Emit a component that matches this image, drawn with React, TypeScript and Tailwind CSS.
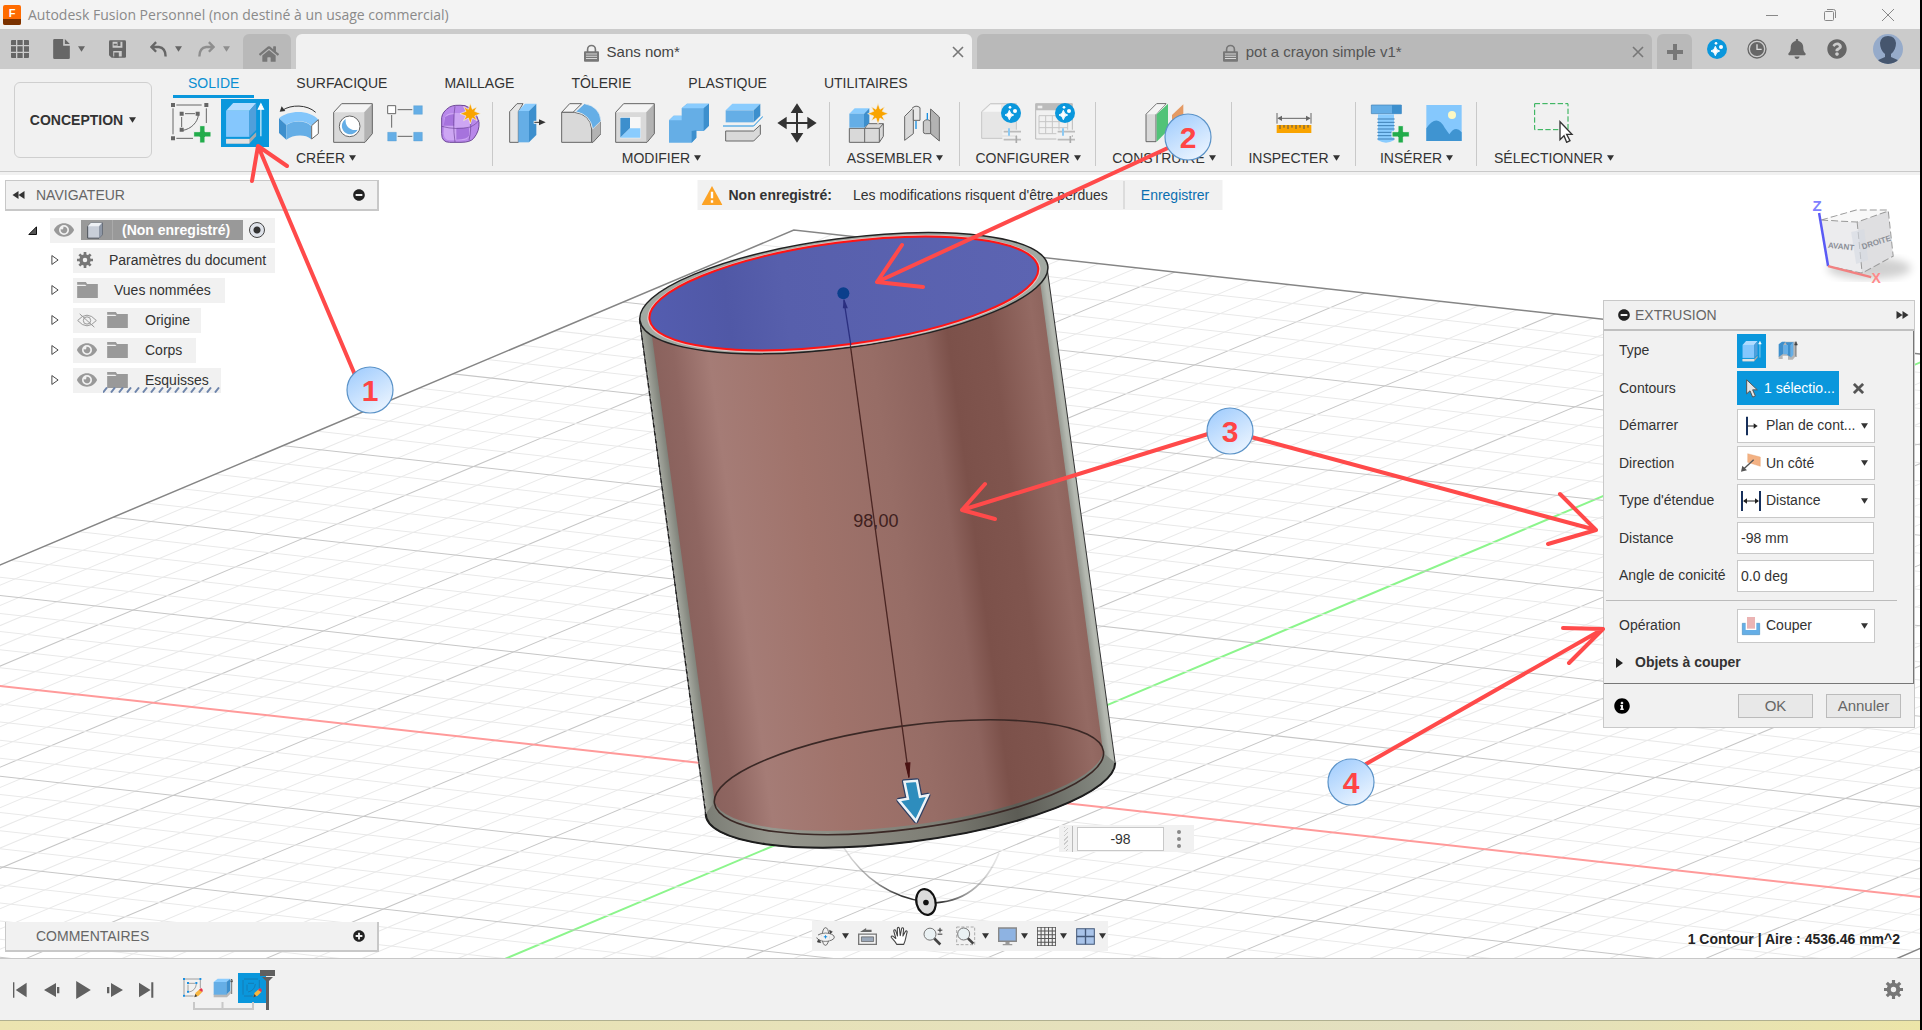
import type { ReactNode } from "react";
import { FaBell, FaEye, FaHome, FaInfoCircle, FaMinusCircle, FaPlusCircle, FaQuestionCircle } from "react-icons/fa";

const ink = "#666";

function Caret({ className = "text-[#333]" }: { className?: string }) {
    return (
        <svg viewBox="0 0 10 8" className={`h-[6px] w-[7px] shrink-0 ${className}`} fill="currentColor">
            <path d="M0 0h10L5 8z" />
        </svg>
    );
}

function Icon({ children, className = "size-10", box = "0 0 120 120" }: { children: ReactNode; className?: string; box?: string }) {
    return (
        <svg viewBox={box} className={`shrink-0 ${className}`} fill="none">
            {children}
        </svg>
    );
}

function Gear({ className = "size-4 text-[#777]" }: { className?: string }) {
    return (
        <svg viewBox="-30 -30 60 60" className={`shrink-0 ${className}`}>
            <circle r="15" fill="none" stroke="currentColor" strokeWidth="13" />
            {[0, 45, 90, 135].map((a) => (
                <path key={a} d="M-5-30H5V-17H-5zM-5 17H5V30H-5z" transform={`rotate(${a})`} fill="currentColor" />
            ))}
        </svg>
    );
}

/* ---------- Ribbon icons ---------- */

function GreenPlus({ x, y }: { x: number; y: number }) {
    return <path transform={`translate(${x} ${y})`} d="M-8-26H8V-8H26V8H8V26H-8V8H-26V-8H-8z" fill="#22ac4b" stroke="#f1f1f1" strokeWidth="3" />;
}

function Spark({ x, y }: { x: number; y: number }) {
    return (
        <path
            transform={`translate(${x} ${y})`}
            d="M0-31L6-13L20-21L13-7L31 0L13 7L20 21L6 13L0 31L-6 13L-20 21L-13 7L-31 0L-13-7L-20-21L-6-13z"
            fill="#f9a400"
            stroke="#f1f1f1"
            strokeWidth="2"
        />
    );
}

function SketchIcon() {
    return (
        <Icon>
            <path d="M16 6H92M6 16V94M106 16V60M16 106H66M42 32H72M32 42V72" stroke={ink} strokeWidth="3" />
            <path d="M82 36C80 58 60 78 36 82" stroke={ink} strokeWidth="3" />
            <path d="M0 0h12v12H0zM100 0h12v12h-12zM0 100h12v12H0zM26 26h12v12H26zM74 26h12v12H74zM26 74h12v12H26z" fill={ink} />
            <GreenPlus x={94} y={94} />
        </Icon>
    );
}

function ExtrudeIcon({ className = "size-12" }: { className?: string }) {
    return (
        <Icon className={className} box="0 0 142 142">
            <path d="M15 118H84L104 98V110L84 132H15z" fill="#a9a9a9" />
            <path d="M15 118H84V132H15z" fill="#e2e2e2" />
            <path d="M15 35L36 12H104L84 35z" fill="#b0dbff" />
            <path d="M15 35H84V112H15z" fill="#85c7fd" />
            <path d="M84 35L104 12V92L84 112z" fill="#4f9fdb" />
            <path d="M118 110V22M110 30L118 14L126 30z" stroke="#fff" strokeWidth="3" fill="#fff" />
        </Icon>
    );
}

function RevolveIcon() {
    return (
        <Icon>
            <path d="M110 28C84 4 36 4 10 22" stroke="#333" strokeWidth="3" />
            <path d="M2 26L8 10L19 24z" fill="#333" />
            <path d="M0 46C30 20 92 20 118 50L98 68C78 50 42 52 22 66z" fill="#83c6fb" />
            <path d="M0 46L22 66V110L0 90z" fill="#3d8fcd" />
            <path d="M22 66C44 52 78 52 96 68V108C78 92 40 96 22 110z" fill="#65aee6" />
            <path d="M98 68L118 50V92L98 108z" fill="#fff" stroke={ink} strokeWidth="3" />
        </Icon>
    );
}

function GrayCube({ children }: { children?: ReactNode }) {
    return (
        <>
            <path d="M2 28L26 2H118V92L96 118H2z" fill="#d9d9d9" />
            <path d="M2 28L26 2H118L94 28z" fill="#f4f4f4" />
            <path d="M94 28L118 2V92L94 118z" fill="#b3b3b3" />
            <path d="M2 28L26 2H118V92L96 118H2z" stroke={ink} strokeWidth="3" />
            {children}
        </>
    );
}

function HoleIcon() {
    return (
        <Icon>
            <GrayCube>
                <circle cx="50" cy="70" r="31" fill="#fff" stroke={ink} strokeWidth="3" />
                <path d="M38 48A25 25 0 1 0 74 80A28 28 0 0 1 38 48z" fill="#65aee6" />
            </GrayCube>
        </Icon>
    );
}

function PatternIcon() {
    return (
        <Icon>
            <path d="M32 20H76M14 36V74M32 100H76" stroke={ink} strokeWidth="3" />
            <path d="M2 8h24v24H2z" fill="#fff" stroke={ink} strokeWidth="3" />
            <path d="M80 8h26v26H80zM2 88h26v26H2zM80 88h26v26H80z" fill="#65aee6" stroke="#4a94cc" strokeWidth="1" />
        </Icon>
    );
}

function FormIcon() {
    return (
        <Icon>
            <path d="M2 44Q4 26 26 12Q40 4 72 8Q104 18 114 58Q116 84 98 106Q88 118 60 118H26Q2 118 2 92z" fill="#b888ea" stroke="#6d4697" strokeWidth="3" />
            <path d="M10 46Q14 30 40 30H64Q86 32 86 56V96Q82 112 62 112H28Q10 112 8 92z" fill="#cda6f3" />
            <path d="M12 42Q26 32 40 34V68H8zM46 74H84V98Q80 108 46 110z" fill="#a673dd" />
            <path d="M42 10Q34 60 42 117M2 70Q46 82 88 72Q106 64 114 52M88 40Q92 80 84 112" stroke="#6d4697" strokeWidth="2" />
            <Spark x={88} y={32} />
        </Icon>
    );
}

function PressPullIcon() {
    return (
        <Icon>
            <path d="M8 26L30 2H48L34 26V118H8z" fill="#e6e6e6" stroke={ink} strokeWidth="3" />
            <path d="M34 24L54 2H88L66 24z" fill="#8accfe" />
            <path d="M34 24H66V118H34z" fill="#65aee6" />
            <path d="M66 24L88 2V96L66 118z" fill="#3d8fcd" />
            <path d="M80 58H100" stroke="#f1f1f1" strokeWidth="9" />
            <path d="M82 58H104" stroke="#333" strokeWidth="3" />
            <path d="M96 49L116 58L96 67z" fill="#333" />
        </Icon>
    );
}

function FilletIcon() {
    return (
        <Icon>
            <path d="M2 28L26 2H62L36 28z" fill="#f4f4f4" stroke={ink} strokeWidth="3" />
            <path d="M2 28H40Q88 34 92 78V118H2z" fill="#d9d9d9" stroke={ink} strokeWidth="3" />
            <path d="M92 78L120 52V92L96 118H92z" fill="#b3b3b3" stroke={ink} strokeWidth="3" />
            <path d="M44 26L70 2Q116 10 120 54L95 78Q88 34 44 26z" fill="#65aee6" stroke="#f1f1f1" strokeWidth="2" />
        </Icon>
    );
}

function ShellIcon() {
    return (
        <Icon>
            <GrayCube>
                <path d="M15 42h62v64H15z" fill="#f7f7f7" />
                <path d="M16 44h29v32L16 104z" fill="#3d8fcd" />
                <path d="M45 76H76V104H16z" fill="#8accfe" />
            </GrayCube>
        </Icon>
    );
}

function CombineIcon() {
    return (
        <Icon>
            <path d="M0 52L14 38H38V16L54 2H120V68L104 84H82V104L68 119H0z" fill="#65aee6" />
            <path d="M0 52L14 38H38V52zM38 16L54 2H120L104 16z" fill="#8accfe" />
            <path d="M104 16L120 2V68L104 84zM68 84L82 82V104L68 119z" fill="#3d8fcd" />
        </Icon>
    );
}

function SplitIcon() {
    return (
        <Icon>
            <path d="M8 84H92L112 66V94L92 114H8z" fill="#d9d9d9" stroke={ink} strokeWidth="3" />
            <path d="M8 22L28 2H112L92 22z" fill="#8accfe" />
            <path d="M8 22H92V58H8z" fill="#65aee6" />
            <path d="M92 22L112 2V38L92 58z" fill="#3d8fcd" />
            <path d="M0 69H92L120 40" stroke="#f1f1f1" strokeWidth="10" />
            <path d="M0 69H92L120 40" stroke="#1a8fe0" strokeWidth="3" />
        </Icon>
    );
}

function MoveIcon() {
    return (
        <Icon>
            <path d="M60 22V100M22 60H98" stroke="#333" strokeWidth="6" />
            <path d="M60 1L79 30H41zM60 119L79 90H41zM1 60L29 41V79zM119 60L91 41V79z" fill="#333" />
        </Icon>
    );
}

function AssembleIcon() {
    return (
        <Icon>
            <path d="M4 76H50L60 62H106V100L94 118H4z" fill="#d9d9d9" stroke={ink} strokeWidth="3" />
            <path d="M50 76H94L106 62M50 76V118M94 76V118" stroke={ink} strokeWidth="3" />
            <path d="M4 32L20 16H64L48 32z" fill="#8accfe" />
            <path d="M4 32H48V74H4z" fill="#65aee6" />
            <path d="M48 32L64 16V60L48 74z" fill="#3d8fcd" />
            <Spark x={90} y={32} />
        </Icon>
    );
}

function JointIcon() {
    return (
        <Icon>
            <path d="M8 40L34 14V92L8 112z" fill="#d9d9d9" stroke={ink} strokeWidth="3" />
            <path d="M30 16Q42 4 54 14V52H34V20" fill="#e8e8e8" stroke={ink} strokeWidth="3" />
            <path d="M86 18L112 42V114L84 90z" fill="#b3b3b3" stroke={ink} strokeWidth="3" />
            <path d="M64 56Q76 44 86 56V92H70Q64 92 64 86z" fill="#c9c9c9" stroke={ink} strokeWidth="3" />
            <path d="M42 54V78M76 30V50" stroke="#1a8fe0" strokeWidth="4" />
        </Icon>
    );
}

function Stars({ x, y, r = 30 }: { x: number; y: number; r?: number }) {
    return (
        <g transform={`translate(${x} ${y}) scale(${r / 30})`}>
            <circle r="30" fill="#0a97dc" />
            <path d="M-5-8Q-3 4 8 6Q-3 8-5 20Q-7 8-18 6Q-7 4-5-8z" fill="#fff" stroke="#fff" strokeWidth="3" />
            <circle cx="12" cy="-6" r="6" fill="#fff" />
            <circle cx="-3" cy="-17" r="4" fill="#fff" />
        </g>
    );
}

function ConfigIcon({ table }: { table?: boolean }) {
    return (
        <Icon>
            {table ? (
                <>
                    <path d="M2 2H112V108H2z" fill="#f1f1f1" stroke="#bbb" strokeWidth="3" />
                    <path d="M2 2H112V22H2z" fill="#bbb" />
                    <path d="M12 38H98V92H12zM12 56H98M12 74H98M32 38V92M52 38V92M72 38V92" stroke="#c6c6c6" strokeWidth="3" />
                    <path d="M8 8H22V16H8z" fill="#eee" />
                </>
            ) : (
                <>
                    <path d="M2 26L28 2H106V106H2z" fill="#e6e6e6" stroke="#c6c6c6" strokeWidth="3" />
                    <path d="M6 26L29 5H60V26z" fill="#f6f6f6" />
                </>
            )}
            <path d="M64 88H120M64 110H120" stroke="#f1f1f1" strokeWidth="16" />
            <path d="M68 86H120M68 110H120" stroke="#bbb" strokeWidth="5" />
            <path d="M84 76V98" stroke="#8cc9f2" strokeWidth="6" />
            <path d="M106 99V121" stroke="#aaa" strokeWidth="5" />
            <Stars x={90} y={30} />
        </Icon>
    );
}

function PlaneIcon() {
    return (
        <Icon>
            <path d="M6 34L38 2H66L36 34V116H6z" fill="#d9d9d9" stroke={ink} strokeWidth="3" />
            <path d="M8 34L38 4H64L36 34z" fill="#f4f4f4" />
            <path d="M38 34L72 2V82L38 116z" fill="#52c378" />
            <path d="M84 36L118 4V84L84 116z" fill="#e59a63" />
        </Icon>
    );
}

function MeasureIcon() {
    return (
        <Icon>
            <path d="M9 30V62M111 30V62M14 46H106" stroke={ink} strokeWidth="3" />
            <path d="M10 46L24 38V54zM110 46L96 38V54z" fill={ink} />
            <path d="M8 66H112V90H8z" fill="#f9a400" />
            <path d="M18 66V78M30 66V74M42 66V78M54 66V74M66 66V78M78 66V74M90 66V78M102 66V74" stroke="#555" strokeWidth="3" />
        </Icon>
    );
}

function BoltIcon() {
    return (
        <Icon>
            <path d="M4 6H94V32H4z" fill="#65aee6" stroke="#3d7fb5" strokeWidth="2" />
            <path d="M66 6H94V32H66z" fill="#3d8fcd" />
            <path d="M24 34H72V112Q48 126 24 112z" fill="#8accfe" />
            <path d="M22 48H74M22 58H74M22 68H74M22 78H74M22 88H74M22 98H74M22 108H74" stroke="#3d7fb5" strokeWidth="3" />
            <GreenPlus x={92} y={94} />
        </Icon>
    );
}

function PictureIcon() {
    return (
        <Icon>
            <path d="M7 6H113V114H7z" fill="#85c8fd" />
            <path d="M7 76Q38 30 62 74L76 94Q94 66 113 88V114H7z" fill="#3f94d1" />
            <circle cx="84" cy="36" r="12" fill="#fdf9c4" />
        </Icon>
    );
}

function SelectIcon() {
    return (
        <Icon>
            <path d="M2 2H102V80H2z" stroke="#22ac4b" strokeWidth="3" strokeDasharray="16 7" />
            <path d="M78 56V110L90 98L98 118L108 113L98 94H114z" fill="#fff" stroke="#333" strokeWidth="4" />
        </Icon>
    );
}

type Tool = { name: string; icon: ReactNode; active?: boolean };

const groups: { label: string; width: string; tools: Tool[] }[] = [
    {
        label: "CRÉER",
        width: "w-[340px] pl-[6px]",
        tools: [
            { name: "Esquisse", icon: <SketchIcon /> },
            { name: "Extrusion", icon: <ExtrudeIcon />, active: true },
            { name: "Révolution", icon: <RevolveIcon /> },
            { name: "Perçage", icon: <HoleIcon /> },
            { name: "Réseau", icon: <PatternIcon /> },
            { name: "Forme", icon: <FormIcon /> },
        ],
    },
    {
        label: "MODIFIER",
        width: "w-[337px]",
        tools: [
            { name: "Appuyer/tirer", icon: <PressPullIcon /> },
            { name: "Congé", icon: <FilletIcon /> },
            { name: "Coque", icon: <ShellIcon /> },
            { name: "Combiner", icon: <CombineIcon /> },
            { name: "Scinder", icon: <SplitIcon /> },
            { name: "Déplacer", icon: <MoveIcon /> },
        ],
    },
    { label: "ASSEMBLER", width: "w-[130px]", tools: [{ name: "Composant", icon: <AssembleIcon /> }, { name: "Liaison", icon: <JointIcon /> }] },
    { label: "CONFIGURER", width: "w-[136px]", tools: [{ name: "Configuration", icon: <ConfigIcon /> }, { name: "Table", icon: <ConfigIcon table /> }] },
    { label: "CONSTRUIRE", width: "w-[136px]", tools: [{ name: "Plan", icon: <PlaneIcon /> }] },
    { label: "INSPECTER", width: "w-[124px]", tools: [{ name: "Mesurer", icon: <MeasureIcon /> }] },
    { label: "INSÉRER", width: "w-[121px]", tools: [{ name: "Boulon", icon: <BoltIcon /> }, { name: "Image", icon: <PictureIcon /> }] },
    { label: "SÉLECTIONNER", width: "w-[154px]", tools: [{ name: "Sélection", icon: <SelectIcon /> }] },
];

/* ---------- Top bars ---------- */

function TitleBar() {
    return (
        <header className="flex h-[29px] items-center bg-[#f3f3f3] pl-[3px]">
            <svg viewBox="0 0 18 20" className="h-5 w-[18px]">
                <rect width="18" height="20" rx="2" fill="#ff6b00" />
                <path d="M0 14h18v4a2 2 0 0 1-2 2H2a2 2 0 0 1-2-2z" fill="#7a3200" />
                <text x="9" y="12" fontSize="11" fontWeight="700" fill="#fff" textAnchor="middle">F</text>
            </svg>
            <h1 className="ml-[7px] font-['Open_Sans',sans-serif] text-[14px] text-[#8a8a8a]">
                Autodesk Fusion Personnel (non destiné à un usage commercial)
            </h1>
            <div className="ml-auto flex items-center gap-[46px] pr-[26px] text-[#888]">
                <button aria-label="Réduire">
                    <svg viewBox="0 0 12 12" className="size-3" stroke="currentColor"><path d="M0 6.5h12" /></svg>
                </button>
                <button aria-label="Restaurer">
                    <svg viewBox="0 0 12 12" className="size-3" stroke="currentColor" fill="none">
                        <rect x=".5" y="2.5" width="9" height="9" rx="1" />
                        <path d="M3 .5h6.5a2 2 0 0 1 2 2V9" />
                    </svg>
                </button>
                <button aria-label="Fermer">
                    <svg viewBox="0 0 12 12" className="size-3" stroke="currentColor"><path d="M0 0l12 12M12 0L0 12" /></svg>
                </button>
            </div>
        </header>
    );
}

function Lock() {
    return (
        <svg viewBox="0 0 46 54" className="h-[18px] w-[15px]">
            <path d="M11 24V16a12 12 0 0 1 24 0v8" fill="none" stroke="#777" strokeWidth="5" />
            <rect y="22" width="46" height="32" rx="3" fill="#777" />
            <path d="M6 30H40M6 37H40M6 44H40" stroke="#ddd" strokeWidth="3" />
        </svg>
    );
}

function DocTab({ title, active }: { title: string; active?: boolean }) {
    return (
        <div className={`flex h-[35px] flex-1 items-center rounded-t-md pr-2 pl-4 ${active ? "bg-[#f1f1f1] text-[#444]" : "bg-[#b9b9b9] text-[#555]"}`}>
            <a href="#" className="flex flex-1 items-center justify-center gap-2 pt-[2px] text-[15px]">
                <Lock />
                {title}
            </a>
            <button aria-label={`Fermer ${title}`}>
                <svg viewBox="0 0 12 12" className="size-3" stroke="#777" strokeWidth="1.6"><path d="M1 1l10 10M11 1L1 11" /></svg>
            </button>
        </div>
    );
}

function TabBar() {
    return (
        <nav className="flex h-10 items-end bg-[#cbcbcb] text-[#666]">
            <div className="flex w-[243px] items-center self-stretch pl-[11px]">
                <button aria-label="Panneau de données">
                    <svg viewBox="0 0 54 54" className="size-[18px]" fill="#666">
                        <path d="M3 0h12v15H0V3a3 3 0 0 1 3-3zM19 0h16v15H19zM39 0h12a3 3 0 0 1 3 3v12H39zM0 19h15v16H0zM19 19h16v16H19zM39 19h15v16H39zM0 39h15v15H3a3 3 0 0 1-3-3zM19 39h16v15H19zM39 39h15v12a3 3 0 0 1-3 3H39z" />
                    </svg>
                </button>
                <button aria-label="Fichier" className="ml-6 flex items-center gap-2">
                    <svg viewBox="0 0 50 60" className="h-5 w-[17px]" fill="#666">
                        <path d="M4 0H30V20H50V56a4 4 0 0 1-4 4H4a4 4 0 0 1-4-4V4a4 4 0 0 1 4-4zM35 0L50 15H35z" />
                    </svg>
                    <Caret className="text-[#666]" />
                </button>
                <button aria-label="Enregistrer sous" className="ml-6">
                    <svg viewBox="0 0 52 54" className="h-[18px] w-[17px]">
                        <path d="M4 0H48a4 4 0 0 1 4 4V50a4 4 0 0 1-4 4H8L0 46V4a4 4 0 0 1 4-4z" fill="#666" />
                        <path d="M11 5H41V23H11zM13 33H39V50H13z" fill="#cbcbcb" />
                        <path d="M16 38H30V54H16zM26 5H35V18H26zM14 11H24V16H14z" fill="#666" />
                    </svg>
                </button>
                <button aria-label="Annuler l'action" className="ml-6 flex items-center gap-2">
                    <svg viewBox="0 0 50 46" className="h-4 w-[17px]" fill="none" stroke="#666" strokeWidth="7">
                        <path d="M18 3L4 17L18 31M4 17H26Q46 20 46 45" />
                    </svg>
                    <Caret className="text-[#666]" />
                </button>
                <button aria-label="Rétablir" className="ml-4 flex items-center gap-2 opacity-60">
                    <svg viewBox="0 0 50 46" className="h-4 w-[17px]" fill="none" stroke="#666" strokeWidth="7">
                        <path d="M32 3L46 17L32 31M46 17H24Q4 20 4 45" />
                    </svg>
                    <Caret className="text-[#666]" />
                </button>
            </div>
            <button aria-label="Accueil" className="flex h-[35px] w-12 items-center justify-center rounded-t-md bg-[#b9b9b9] pt-1 pl-1">
                <FaHome className="size-5 text-[#777]" />
            </button>
            <div className="ml-[5px] flex flex-1 gap-[5px]">
                <DocTab title="Sans nom*" active />
                <DocTab title="pot a crayon simple v1*" />
            </div>
            <button aria-label="Nouvel onglet" className="ml-[5px] flex h-[35px] w-[35px] items-center justify-center rounded-t-md bg-[#b9b9b9]">
                <svg viewBox="0 0 16 16" className="size-4" fill="#777"><path d="M6 0h4v6h6v4h-6v6H6v-6H0V6h6z" /></svg>
            </button>
            <div className="flex items-center gap-5 self-stretch pr-[17px] pl-[15px]">
                <button aria-label="Nouveautés">
                    <Icon box="0 0 60 60" className="size-5"><Stars x={30} y={30} /></Icon>
                </button>
                <button aria-label="Activité">
                    <svg viewBox="0 0 60 60" className="size-5" fill="none">
                        <circle cx="30" cy="30" r="27" stroke="#666" strokeWidth="4" />
                        <circle cx="30" cy="30" r="21" fill="#666" />
                        <path d="M30 16V31H44" stroke="#ddd" strokeWidth="4" />
                    </svg>
                </button>
                <button aria-label="Notifications"><FaBell className="size-5" /></button>
                <button aria-label="Aide"><FaQuestionCircle className="size-5" /></button>
                <button aria-label="Compte" className="ml-[6px]">
                    <svg viewBox="0 0 30 30" className="size-[30px]">
                        <defs><clipPath id="avatar"><circle cx="15" cy="15" r="15" /></clipPath></defs>
                        <g clipPath="url(#avatar)">
                            <rect width="30" height="30" fill="#96abca" />
                            <path d="M7 9Q8 2 15 2Q22 2 23 9Q23 16 18 20V23L27 27V30H3V27L12 23V20Q7 16 7 9z" fill="#46566e" />
                        </g>
                    </svg>
                </button>
            </div>
        </nav>
    );
}

function Ribbon() {
    return (
        <section className="flex h-[106px] bg-[#f1f1f1] text-[14px] text-[#333]">
            <div className="mb-[3px] flex flex-1 border-b border-[#c9c9c9]">
                <button className="mt-[13px] ml-[14px] flex h-[76px] w-[138px] items-center justify-center gap-[6px] rounded-md border border-[#cfcfcf] font-bold">
                    CONCEPTION <Caret />
                </button>
                <div className="flex flex-1 flex-col">
                    <div className="ml-[21px] flex h-[29px] gap-[27px]">
                        {["SOLIDE", "SURFACIQUE", "MAILLAGE", "TÔLERIE", "PLASTIQUE", "UTILITAIRES"].map((t, i) => (
                            <button key={t} className={`h-[29px] border-b-3 px-[15px] pt-[2px] ${i === 0 ? "border-[#0a97dc] text-[#0a8fd2]" : "border-transparent"}`}>
                                {t}
                            </button>
                        ))}
                    </div>
                    <div className="ml-px flex">
                        {groups.map((g, i) => (
                            <div key={g.label} className={`relative flex h-[68px] flex-col items-center ${g.width}`}>
                                <div className="flex h-12 items-center pt-[2px]">
                                    {g.tools.map((t) => (
                                        <button
                                            key={t.name}
                                            aria-label={t.name}
                                            className="flex h-12 w-[54px] items-center justify-center"
                                        >
                                            {t.active ? <span className="bg-[#0a97dc]">{t.icon}</span> : t.icon}
                                        </button>
                                    ))}
                                </div>
                                <button className="mt-[2px] flex h-5 items-center gap-1 whitespace-nowrap">
                                    {g.label} <Caret />
                                </button>
                                {i < groups.length - 1 && <i className="absolute top-1 right-0 h-16 w-px bg-[#c9c9c9]" />}
                            </div>
                        ))}
                    </div>
                </div>
            </div>
        </section>
    );
}

/* ---------- 3D canvas ---------- */

const SLOPE_A = -0.4215;
const SLOPE_B = 0.11;

function GridLines() {
    const lines: ReactNode[] = [];
    for (let k = 1; k <= 59; k++) {
        const y = 565 + k * 20.2;
        lines.push(
            <line key={`a${k}`} x1={0} y1={y} x2={1920} y2={y + SLOPE_A * 1920} stroke={k === 30 ? "#8cf58c" : k % 5 === 0 ? "#c6c6c6" : "#e9e9e9"} strokeWidth={k === 30 ? 2 : 1} />
        );
    }
    for (let k = 1; k <= 60; k++) {
        const y = 143 + k * 18.07;
        lines.push(
            <line key={`b${k}`} x1={0} y1={y} x2={1920} y2={y + SLOPE_B * 1920} stroke={k === 30 ? "#ff9a9a" : k % 5 === 0 ? "#c6c6c6" : "#e9e9e9"} strokeWidth={k === 30 ? 2 : 1} />
        );
    }
    return <g clipPath="url(#floor)">{lines}</g>;
}

function Cylinder() {
    return (
        <g>
            <path d="M640 319L706 813A206 53 -7.6 0 0 1115 762L1047 268z" fill="url(#shell)" stroke="#333" strokeWidth="1" />
            <path d="M706 813A206 53 -7.6 0 0 1115 762L1103 752L715 801z" fill="url(#rim)" />
            <path d="M640 319L706 813" stroke="#fff" strokeWidth="2" strokeDasharray="3 5" />
            <path d="M640 319L706 813" stroke="#222" strokeWidth="1.5" strokeDasharray="5 3" />
            <path d="M706 813A206 53 -7.6 0 0 1115 762" fill="none" stroke="#1c1c1c" strokeWidth="2" />
            <path d="M650 318L715 801A196 51 -7.6 0 0 1103 752L1038 267z" fill="url(#cut)" />
            <ellipse cx="909" cy="776.5" rx="196" ry="51.5" transform="rotate(-7.6 909 776.5)" fill="none" stroke="#3a2825" strokeWidth="1.6" />
            <ellipse cx="844" cy="293" rx="205.5" ry="54.5" transform="rotate(-7.6 844 293)" fill="#a2a9a2" stroke="#222" strokeWidth="1.5" />
            <ellipse cx="844" cy="293.5" rx="198" ry="53" transform="rotate(-7.6 844 293.5)" fill="#e3c3c3" />
            <ellipse cx="844" cy="293.3" rx="195.8" ry="51" transform="rotate(-7.6 844 293.3)" fill="url(#profile)" stroke="#ff1414" strokeWidth="2" />
            <path d="M844 300L851 345" stroke="#2b2f80" strokeWidth="1.3" />
            <path d="M850.5 345L909 776" stroke="#4a2522" strokeWidth="1.3" />
            <path d="M844 298L848 308H843z" fill="#2b2f80" />
            <path d="M905.5 762.5L909 777L910 762z" fill="#4a1212" stroke="#4a1212" />
            <circle cx="843.5" cy="293" r="6" fill="#0b3f8c" />
            <text x="876" y="527" textAnchor="middle" fontSize="18" fill="#40211e">98,00</text>
            <path d="M904.5 781L917 780L920 796L928 794.5L916 820L899 799.5L908 798z" fill="#2e8dbd" stroke="#2d3f63" strokeWidth="5" strokeLinejoin="round" />
            <path d="M904.5 781L917 780L920 796L928 794.5L916 820L899 799.5L908 798z" fill="#2e8dbd" stroke="#eef3f7" strokeWidth="2.5" />
        </g>
    );
}

function TaperHandle() {
    return (
        <g fill="none">
            <path d="M844 847Q874 894 926 901" stroke="url(#fadeL)" strokeWidth="1.6" />
            <path d="M926 902Q978 904 999 852" stroke="url(#fadeR)" strokeWidth="1.6" />
            <ellipse cx="926" cy="901" rx="9.5" ry="13" transform="rotate(-14 926 901)" fill="#dcdcdc" stroke="#111" strokeWidth="2.2" />
            <circle cx="926" cy="901.5" r="2.8" fill="#111" />
        </g>
    );
}

function ViewCube() {
    return (
        <g>
            <ellipse cx="1868" cy="268" rx="42" ry="11" fill="#000" opacity=".18" filter="url(#soft)" />
            <path d="M1820 220L1856 222L1861 273L1827 266z" fill="#ececee" />
            <path d="M1856 222L1887 211L1892 256L1861 273z" fill="#dfdfe1" />
            <path d="M1820 220L1855 210H1887L1856 222z" fill="#f8f8f8" />
            <path d="M1820 220L1855 210H1887L1892 256L1861 273L1827 266M1820 220L1856 222L1887 211M1856 222L1861 273" fill="none" stroke="#999" strokeDasharray="7 3" />
            <path d="M1850 232L1863 229L1867 260L1855 264z" fill="#d5dae3" opacity=".6" />
            <text x="1840" y="249" transform="rotate(6 1840 246)" textAnchor="middle" fontSize="8" fontWeight="700" fill="#8a8e96">AVANT</text>
            <text x="1875" y="245" transform="rotate(-18 1875 242)" textAnchor="middle" fontSize="8" fontWeight="700" fill="#8a8e96">DROITE</text>
            <path d="M1818 213L1827 266" stroke="#5a5af5" strokeWidth="2.5" />
            <path d="M1827 266L1870 277" stroke="#f28080" strokeWidth="2.5" />
            <text x="1816" y="211" textAnchor="middle" fontSize="15" fontWeight="700" fill="#8080ff">Z</text>
            <text x="1875" y="283" textAnchor="middle" fontSize="14" fontWeight="700" fill="#ff8a8a">X</text>
        </g>
    );
}

function Scene() {
    return (
        <svg viewBox="0 175 1920 782" preserveAspectRatio="xMidYMid slice" className="absolute inset-0 h-full w-full">
            <defs>
                <clipPath id="floor"><path d="M794 230L1920 354V947L1890 960H0V565z" /></clipPath>
                <filter id="soft"><feGaussianBlur stdDeviation="4" /></filter>
                <linearGradient id="shell" gradientUnits="userSpaceOnUse" x1="640" y1="319" x2="1043" y2="264">
                    <stop offset="0" stopColor="#a4a79e" />
                    <stop offset=".035" stopColor="#6d7068" />
                    <stop offset=".97" stopColor="#73776f" />
                    <stop offset="1" stopColor="#b4b8b0" />
                </linearGradient>
                <linearGradient id="rim" gradientUnits="userSpaceOnUse" x1="706" y1="813" x2="1115" y2="762">
                    <stop offset="0" stopColor="#7b7d75" />
                    <stop offset=".15" stopColor="#96978e" />
                    <stop offset=".55" stopColor="#7e7e75" />
                    <stop offset=".75" stopColor="#5c5c55" />
                    <stop offset="1" stopColor="#8b9088" />
                </linearGradient>
                <linearGradient id="cut" gradientUnits="userSpaceOnUse" x1="652" y1="340" x2="1040" y2="287">
                    <stop offset="0" stopColor="#8a625d" />
                    <stop offset=".05" stopColor="#8f6661" />
                    <stop offset=".14" stopColor="#a57c76" />
                    <stop offset=".33" stopColor="#a0736b" />
                    <stop offset=".55" stopColor="#976d66" />
                    <stop offset=".69" stopColor="#8d635d" />
                    <stop offset=".75" stopColor="#7c514a" />
                    <stop offset=".86" stopColor="#80554e" />
                    <stop offset=".97" stopColor="#946a63" />
                    <stop offset="1" stopColor="#8f655e" />
                </linearGradient>
                <linearGradient id="profile">
                    <stop offset="0" stopColor="#545db0" />
                    <stop offset=".2" stopColor="#5058a6" />
                    <stop offset=".35" stopColor="#575fac" />
                    <stop offset="1" stopColor="#5c64b2" />
                </linearGradient>
                <linearGradient id="fadeL"><stop offset="0" stopColor="#999" stopOpacity=".3" /><stop offset=".7" stopColor="#333" /></linearGradient>
                <linearGradient id="fadeR"><stop offset=".2" stopColor="#333" /><stop offset="1" stopColor="#999" stopOpacity=".2" /></linearGradient>
            </defs>
            <GridLines />
            <path d="M0 565L794 230L1920 354M1890 960L1920 947" fill="none" stroke="#858585" strokeWidth="1.5" />
            <TaperHandle />
            <Cylinder />
            <ViewCube />
        </svg>
    );
}

/* ---------- Browser panel ---------- */

function Folder() {
    return (
        <svg viewBox="0 0 62 48" className="h-4 w-[21px] shrink-0" fill="#999">
            <path d="M0 0H26L30 6H62V48H0V12H28L24 8H0z" />
        </svg>
    );
}

function HiddenEye() {
    return (
        <svg viewBox="0 0 60 44" className="h-[15px] w-5 shrink-0" fill="none" stroke="#999" strokeWidth="3">
            <path d="M2 22Q30-10 58 22Q30 54 2 22zM8 2L52 42" />
            <circle cx="30" cy="22" r="11" />
        </svg>
    );
}

function Cube() {
    return (
        <svg viewBox="0 0 48 50" className="h-[17px] w-4 shrink-0">
            <path d="M2 12L12 2H46V38L36 48H2z" fill="#c8ced8" stroke="#4b5058" strokeWidth="3" />
            <path d="M2 12L12 2H46L36 12z" fill="#eef1f5" />
            <path d="M36 12L46 2V38L36 48z" fill="#8e97a6" />
        </svg>
    );
}

function TreeRow({ children, className }: { children: ReactNode; className: string }) {
    return (
        <li className="flex h-[30px] items-center gap-[14px] pl-[51px]">
            <button aria-label="Développer">
                <svg viewBox="0 0 9 12" className="h-3 w-2" fill="#fff" stroke="#333"><path d="M1 1v10l7-5z" /></svg>
            </button>
            <span className={`flex h-[25px] items-center bg-[#f1f1f1] pl-1 ${className}`}>{children}</span>
        </li>
    );
}

function Browser() {
    return (
        <aside className="w-[379px] text-[14px] text-[#333]">
            <div className="mt-[5px] ml-[5px] flex h-[31px] items-center border-t border-r-2 border-b-2 border-l border-[#c8c8c8] bg-[#f1f1f1] text-[#666]">
                <button aria-label="Réduire le navigateur" className="ml-[6px] w-6">
                    <svg viewBox="0 0 12 8" className="h-2 w-[13px]" fill="#333"><path d="M6 0v8L0 4zM12 0v8L6 4z" /></svg>
                </button>
                <h2>NAVIGATEUR</h2>
                <button aria-label="Masquer" className="mr-3 ml-auto"><FaMinusCircle className="size-3 text-[#222]" /></button>
            </div>
            <ul className="mt-1">
                <li className="flex h-[30px] items-center pl-7">
                    <button aria-label="Replier">
                        <svg viewBox="0 0 9 9" className="size-[9px]" fill="#555" stroke="#111"><path d="M8.5.8v7.7H.8z" /></svg>
                    </button>
                    <span className="ml-[13px] flex h-[25px] w-[225px] items-center bg-[#f1f1f1] pl-1">
                        <FaEye className="size-5 text-[#999]" />
                        <span className="ml-[7px] flex h-5 w-[162px] items-center bg-[#999] pl-[6px] font-bold text-white">
                            <Cube />
                            <i className="ml-[9px] h-5 w-px bg-[#aaa]" />
                            <span className="ml-[9px]">(Non enregistré)</span>
                        </span>
                        <input type="radio" defaultChecked aria-label="Activer le composant" className="ml-[6px] size-4 appearance-none rounded-full border border-[#444] bg-[radial-gradient(#333_0_3px,#dfe3ea_4px)]" />
                    </span>
                </li>
                <TreeRow className="w-[202px]">
                    <Gear />
                    <span className="ml-4">Paramètres du document</span>
                </TreeRow>
                <TreeRow className="w-[152px]">
                    <Folder />
                    <span className="ml-4">Vues nommées</span>
                </TreeRow>
                <TreeRow className="w-[128px]">
                    <HiddenEye />
                    <span className="mr-[17px] ml-[10px]"><Folder /></span>
                    Origine
                </TreeRow>
                <TreeRow className="w-[123px]">
                    <FaEye className="size-5 text-[#999]" />
                    <span className="mr-[17px] ml-[10px]"><Folder /></span>
                    Corps
                </TreeRow>
                <TreeRow className="relative w-[148px]">
                    <FaEye className="size-5 text-[#999]" />
                    <span className="mr-[17px] ml-[10px]"><Folder /></span>
                    Esquisses
                    <svg viewBox="0 0 118 6" className="absolute right-0 bottom-0 h-[6px] w-[118px]" stroke="#6d84ab" strokeWidth="2">
                        <path d="M0 5.5L4 .5M8 5.5L12 .5M16 5.5L20 .5M24 5.5L28 .5M32 5.5L36 .5M40 5.5L44 .5M48 5.5L52 .5M56 5.5L60 .5M64 5.5L68 .5M72 5.5L76 .5M80 5.5L84 .5M88 5.5L92 .5M96 5.5L100 .5M104 5.5L108 .5M112 5.5L116 .5" />
                    </svg>
                </TreeRow>
            </ul>
        </aside>
    );
}

/* ---------- Extrude dialog ---------- */

function Row({ label, htmlFor, children }: { label: string; htmlFor?: string; children: ReactNode }) {
    return (
        <div className="flex h-[37px] items-center pl-[15px] even:h-[38px]">
            <label htmlFor={htmlFor} className="w-[118px] whitespace-nowrap">{label}</label>
            {children}
        </div>
    );
}

function SelectBox({ id, value, icon }: { id: string; value: string; icon: ReactNode }) {
    return (
        <div className="relative w-[138px]">
            <select id={id} className="h-[34px] w-full appearance-none border border-[#c8c8c8] bg-white pl-[28px] text-[14px] text-[#333]">
                <option>{value}</option>
            </select>
            <span className="pointer-events-none absolute top-[7px] left-1">{icon}</span>
            <span className="pointer-events-none absolute top-[14px] right-[7px] flex"><Caret /></span>
        </div>
    );
}

const startIcon = (
    <Icon box="0 0 60 60" className="size-5">
        <path d="M18 2V58" stroke="#17305c" strokeWidth="6" />
        <path d="M20 30H42" stroke="#222" strokeWidth="3" />
        <path d="M38 22L50 30L38 38z" fill="#222" />
    </Icon>
);
const sideIcon = (
    <Icon box="0 0 60 60" className="size-5">
        <path d="M20 2L58 12V40L20 28z" fill="#f3b183" stroke="#e59a63" />
        <path d="M38 20L8 48" stroke="#555" strokeWidth="4" />
        <path d="M0 56L4 38L18 52z" fill="#555" />
    </Icon>
);
const distanceIcon = (
    <Icon box="0 0 60 60" className="size-5">
        <path d="M3 0V60M57 0V60" stroke="#17305c" strokeWidth="6" />
        <path d="M10 30H50" stroke="#222" strokeWidth="3" />
        <path d="M6 30L18 22V38zM54 30L42 22V38z" fill="#222" />
    </Icon>
);
const cutIcon = (
    <Icon box="0 0 60 60" className="size-5">
        <path d="M4 22H56V56H4z" fill="#65aee6" stroke="#4a8fc4" strokeWidth="2" />
        <path d="M14 0H46V42H14z" fill="#fff" />
        <path d="M18 3H42V38H18z" fill="#ebb4b4" />
    </Icon>
);

function ExtrudeDialog() {
    return (
        <form className="mt-[125px] mr-[5px] w-[312px] border border-[#c8c8c8] bg-[#f1f1f1] text-[14px] text-[#333]">
            <div className="flex h-[30px] items-center border-b-2 border-[#c0c0c0] pr-[5px] pl-[14px] text-[#666]">
                <FaMinusCircle className="size-3 text-[#222]" />
                <h2 className="ml-[5px]">EXTRUSION</h2>
                <button type="button" aria-label="Épingler" className="ml-auto">
                    <svg viewBox="0 0 12 8" className="h-2 w-[13px]" fill="#333"><path d="M0 0v8l6-4zM6 0v8l6-4z" /></svg>
                </button>
            </div>
            <div className="border-r border-b border-[#777] pt-px">
                <div>
                    <Row label="Type">
                        <button type="button" aria-label="Extrusion pleine" className="flex h-[34px] w-[29px] items-center justify-center bg-[#0a97dc]">
                            <ExtrudeIcon className="size-6" />
                        </button>
                        <button type="button" aria-label="Extrusion fine" className="ml-3">
                            <Icon box="0 0 60 60" className="size-5">
                                <path d="M2 46L12 40V12L20 2H54V44L44 56H30V44H14V54H2z" fill="#b5b5b5" />
                                <path d="M2 10L12 2H22L16 12V38L2 48zM22 4H46L38 12V48L28 42V14z" fill="#3d8fcd" />
                                <path d="M16 12H30V40H16zM38 12L46 2V42L38 50z" fill="#65aee6" />
                                <path d="M54 48V8M50 12L54 2L58 12z" stroke="#444" strokeWidth="2" fill="#444" />
                            </Icon>
                        </button>
                    </Row>
                    <Row label="Contours">
                        <button type="button" className="flex h-[34px] w-[102px] items-center bg-[#0a97dc] pl-[9px] whitespace-nowrap text-white">
                            <svg viewBox="0 0 36 56" className="mr-[6px] h-[19px] w-3"><path d="M2 2V44L12 35L20 54L28 50L20 32H34z" fill="#e6e6e6" stroke="#555" strokeWidth="3" /></svg>
                            1 sélectio...
                        </button>
                        <button type="button" aria-label="Effacer la sélection" className="ml-[14px]">
                            <svg viewBox="0 0 12 12" className="size-[11px]" stroke="#555" strokeWidth="3"><path d="M1 1l10 10M11 1L1 11" /></svg>
                        </button>
                    </Row>
                    <Row label="Démarrer" htmlFor="start"><SelectBox id="start" value="Plan de cont..." icon={startIcon} /></Row>
                    <Row label="Direction" htmlFor="side"><SelectBox id="side" value="Un côté" icon={sideIcon} /></Row>
                    <Row label="Type d'étendue" htmlFor="extent"><SelectBox id="extent" value="Distance" icon={distanceIcon} /></Row>
                    <Row label="Distance" htmlFor="distance">
                        <input id="distance" defaultValue="-98 mm" className="h-8 w-[137px] border border-[#c8c8c8] bg-white px-[3px]" />
                    </Row>
                    <Row label="Angle de conicité" htmlFor="taper">
                        <input id="taper" defaultValue="0.0 deg" className="h-8 w-[137px] border border-[#c8c8c8] bg-white px-[3px]" />
                    </Row>
                </div>
                <hr className="mt-[6px] mr-4 ml-[2px] border-[#bbb]" />
                <div className="pt-[6px] pb-[2px]">
                    <Row label="Opération" htmlFor="operation"><SelectBox id="operation" value="Couper" icon={cutIcon} /></Row>
                    <button type="button" className="flex h-[37px] items-center gap-3 pl-3 font-bold">
                        <svg viewBox="0 0 7 10" className="h-[10px] w-[7px]" fill="#222"><path d="M0 0v10l7-5z" /></svg>
                        Objets à couper
                    </button>
                </div>
            </div>
            <div className="flex h-[43px] items-center gap-[13px] pr-[13px] pl-[10px] text-[15px] text-[#666]">
                <FaInfoCircle className="mr-auto size-4 text-black" />
                <button type="button" className="h-6 w-[75px] border border-[#bbb] bg-[#e8e8e8]">OK</button>
                <button type="button" className="h-6 w-[75px] border border-[#bbb] bg-[#e8e8e8]">Annuler</button>
            </div>
        </form>
    );
}

/* ---------- Canvas overlays ---------- */

function Banner() {
    return (
        <div className="absolute top-[5px] left-1/2 flex h-[30px] w-[525px] -translate-x-1/2 items-center bg-[#f1f1f1] pl-1 text-[14px] whitespace-nowrap text-[#333]">
            <svg viewBox="0 0 22 20" className="h-[19px] w-[21px]">
                <path d="M11 0L22 20H0z" fill="#fca326" />
                <path d="M11 6v7M11 15v2.5" stroke="#fff" strokeWidth="2.5" />
            </svg>
            <strong className="ml-[6px]">Non enregistré:</strong>
            <span className="ml-[21px]">Les modifications risquent d'être perdues</span>
            <i className="ml-4 h-7 w-px bg-[#c8c8c8]" />
            <a href="#" className="ml-4 text-[#0a6fb0]">Enregistrer</a>
        </div>
    );
}

function NavBar() {
    return (
        <div className="absolute bottom-[7px] left-1/2 flex h-[30px] w-[296px] -translate-x-1/2 items-center gap-[9px] bg-[#f1f1f1] pl-1">
            <button aria-label="Orbite" className="flex items-center gap-[7px]">
                <svg viewBox="0 0 56 56" className="size-[19px]" fill="none" stroke="#555" strokeWidth="2.5">
                    <ellipse cx="28" cy="28" rx="10" ry="26" strokeDasharray="52 8" />
                    <ellipse cx="28" cy="30" rx="26" ry="12" strokeDasharray="60 9" />
                    <path d="M16 20H40V40H16z" fill="#f1f1f1" stroke="none" />
                    <path d="M28 24V34M23 29H33" stroke="#1a8fe0" strokeWidth="3" />
                    <path d="M8 36L14 46L4 44zM40 10L48 14L42 20z" fill="#333" />
                </svg>
                <Caret />
            </button>
            <button aria-label="Regarder">
                <svg viewBox="0 0 56 50" className="h-[17px] w-[19px]">
                    <path d="M2 18H54V48H2z" fill="#f6f6f6" stroke="#777" strokeWidth="4" />
                    <path d="M10 26H46V40H10z" fill="#9aa7b8" stroke="#555" strokeWidth="2" />
                    <path d="M6 12L24 0V5H40V12z" fill="#666" />
                </svg>
            </button>
            <button aria-label="Panoramique" className="mx-1">
                <svg viewBox="0 0 24 24" className="size-5" fill="#fff" stroke="#444" strokeWidth="1.3" strokeLinejoin="round">
                    <path d="M8 22C6 18 3 16 1.5 13.5C1 12 3 11.5 4.5 13L7 15L4.5 6C4.5 4.5 6 4 6.8 5.5L9 12L8.8 3C9 1.2 11 1.2 11.3 3L12.3 11.5L14 3C14.5 1.5 16.5 2 16.3 3.8L15.5 12L18.5 6.5C19.5 5.2 21 6.2 20.5 7.5C19 12 19 17 16.5 22z" />
                </svg>
            </button>
            <button aria-label="Zoom" className="mr-1">
                <svg viewBox="0 0 60 56" className="h-[19px] w-5" fill="none">
                    <circle cx="21" cy="21" r="18" fill="#eaf1f3" stroke="#777" strokeWidth="3" />
                    <path d="M34 34L52 52" stroke="#444" strokeWidth="8" />
                    <path d="M44 9H58M51 2V16M44 21H58" stroke="#333" strokeWidth="3" />
                </svg>
            </button>
            <button aria-label="Fenêtre de zoom" className="flex items-center gap-[6px]">
                <svg viewBox="0 0 60 60" className="size-5" fill="none">
                    <path d="M2 3H56V56H2z" stroke="#888" strokeWidth="2" strokeDasharray="9 5" />
                    <circle cx="23" cy="24" r="18" fill="#eaf1f3" stroke="#777" strokeWidth="3" />
                    <path d="M36 37L52 53" stroke="#444" strokeWidth="8" />
                </svg>
                <Caret />
            </button>
            <button aria-label="Affichage" className="flex items-center gap-1">
                <svg viewBox="0 0 56 56" className="size-[19px]">
                    <path d="M2 3H54V42H2z" fill="#8eb3e2" stroke="#888" strokeWidth="4" />
                    <path d="M22 44H34V50H42V54H14V50H22z" fill="#999" />
                </svg>
                <Caret />
            </button>
            <button aria-label="Grille" className="flex items-center gap-1">
                <svg viewBox="0 0 56 56" className="size-[19px]" fill="none">
                    <path d="M1 1H55V55H1zM1 12H55M1 23H55M1 34H55M1 45H55M12 1V55M23 1V55M34 1V55M45 1V55" stroke="#555" strokeWidth="3" />
                </svg>
                <Caret />
            </button>
            <button aria-label="Fenêtres" className="flex items-center gap-1">
                <svg viewBox="0 0 56 50" className="h-[17px] w-[19px]">
                    <path d="M2 2H54V48H2z" fill="#a9c4ea" stroke="#44597a" strokeWidth="3" />
                    <path d="M28 2V48M2 25H54" stroke="#44597a" strokeWidth="4" />
                </svg>
                <Caret />
            </button>
        </div>
    );
}

function ValueBox() {
    return (
        <div className="absolute top-[650px] left-[1059px] flex h-[27px] w-[135px] items-center bg-[#f1f1f1]">
            <i className="ml-[5px] h-6 w-1 bg-[repeating-linear-gradient(135deg,#ccc_0_1px,transparent_1px_3px)]" />
            <i className="ml-1 h-[26px] w-px bg-[#bbb]" />
            <input aria-label="Distance" defaultValue="-98" className="ml-1 h-6 w-[87px] border border-[#c8c8c8] bg-white text-center text-[14px] text-[#333]" />
            <button aria-label="Options" className="ml-[13px]">
                <svg viewBox="0 0 4 18" className="h-[18px] w-1" fill="#888">
                    <circle cx="2" cy="2" r="2" /><circle cx="2" cy="9" r="2" /><circle cx="2" cy="16" r="2" />
                </svg>
            </button>
        </div>
    );
}

/* ---------- Timeline ---------- */

function PlayButton({ label, d, box = "0 0 44 46", className = "h-4 w-[15px]" }: { label: string; d: string; box?: string; className?: string }) {
    return (
        <button aria-label={label}>
            <svg viewBox={box} className={className} fill="#606060"><path d={d} /></svg>
        </button>
    );
}

function SketchFeature({ dark }: { dark?: boolean }) {
    return (
        <Icon box="0 0 60 60" className="size-5">
            <path d="M6 3H48M3 6V50M52 6V30M6 54H32M18 16H36M15 20V38M40 18Q38 38 18 42" stroke={dark ? "#1b6fa3" : "#777"} strokeWidth="2" />
            {!dark && <path d="M0 0h6v6H0zM49 0h6v6h-6zM0 50h6v6H0zM12 12h6v6h-6zM37 12h6v6h-6zM12 38h6v6h-6z" fill="#1a8fe0" />}
            <path d="M34 56L38 44L50 34L58 42L46 54z" fill="#f7b640" />
            <path d="M34 58L37 48L43 55z" fill="#444" />
            <path d="M48 36L54 30Q62 34 58 42z" fill="#e8364c" />
        </Icon>
    );
}

function Timeline() {
    return (
        <footer className="flex h-[63px] items-center border-t border-b border-t-[#c8c8c8] border-b-[#b0b090] bg-[#f1f1f1] px-[13px]">
            <div className="flex items-center gap-4">
                <PlayButton label="Début" d="M0 0H4V46H0zM40 2V44L8 23z" />
                <PlayButton label="Précédent" d="M36 2V44L0 23zM39 14H46V33H39z" box="0 0 48 46" className="h-4 w-4" />
                <PlayButton label="Lire" d="M0 0V54L44 27z" box="0 0 44 54" className="h-[18px] w-[15px]" />
                <PlayButton label="Suivant" d="M0 14H7V33H0zM12 2V44L48 23z" box="0 0 48 46" className="h-4 w-4" />
                <PlayButton label="Fin" d="M0 2V44L34 23zM36 0H42V46H36z" />
            </div>
            <div className="relative ml-[29px] flex h-10 items-start pt-[3px]">
                <button aria-label="Esquisse1" className="flex h-[30px] w-[30px] items-center justify-start"><SketchFeature /></button>
                <button aria-label="Extrusion1" className="flex h-[30px] w-[25px] items-center justify-start">
                    <Icon box="0 0 60 60" className="size-5">
                        <path d="M2 48H42L54 38V46L42 58H2z" fill="#b9b9b9" />
                        <path d="M2 12L14 2H52L40 12z" fill="#8accfe" />
                        <path d="M2 12H40V50H2z" fill="#65aee6" />
                        <path d="M40 12L52 2V38L40 50z" fill="#3d8fcd" />
                        <path d="M56 48V8M53 11L56 3L59 11z" stroke="#333" strokeWidth="2" />
                    </Icon>
                </button>
                <button aria-label="Esquisse2" className="flex h-[30px] w-7 items-center justify-center bg-[#0a97dc]"><SketchFeature dark /></button>
                <svg viewBox="0 0 62 8" className="absolute top-8 left-[10px] h-2 w-[62px]" fill="none" stroke="#c8c8c8" strokeWidth="2">
                    <path d="M1 0V7H60V0M29.5 0V7" />
                </svg>
                <svg viewBox="0 0 15 40" className="absolute top-0 left-[77px] h-10 w-[15px]" fill="#606060">
                    <path d="M0 0h15v6H0zM2 7h11L9 11v29H6V11z" />
                </svg>
            </div>
            <button aria-label="Paramètres" className="ml-auto pr-1"><Gear className="size-[19px] text-[#777]" /></button>
        </footer>
    );
}

/* ---------- Numbered callouts ---------- */

const badges = [
    { n: 1, x: 370, y: 390 },
    { n: 2, x: 1188, y: 137 },
    { n: 3, x: 1230, y: 431 },
    { n: 4, x: 1351, y: 782 },
];

function Callouts() {
    return (
        <svg viewBox="0 0 1920 1030" preserveAspectRatio="xMidYMin slice" className="pointer-events-none absolute inset-0 h-full w-full">
            <defs>
                <linearGradient id="badge" x1=".2" y1="0" x2=".8" y2="1">
                    <stop offset="0" stopColor="#a2cdfd" />
                    <stop offset="1" stopColor="#eef6ff" />
                </linearGradient>
            </defs>
            <g fill="none" stroke="#ff4a4a" strokeWidth="4" strokeLinecap="round" strokeLinejoin="round">
                <path d="M355 375L258 146M252 181L258 146L287 166" />
                <path d="M1170 147L877 282M902 245L877 282L923 287" />
                <path d="M1208 434L962 510M985 484L962 510L995 519" />
                <path d="M1251 437L1596 530M1560 494L1596 530L1548 544" />
                <path d="M1366 764L1603 629M1563 628L1603 629L1569 663" />
            </g>
            {badges.map((b) => (
                <g key={b.n}>
                    <circle cx={b.x} cy={b.y} r="23" fill="url(#badge)" stroke="#5b93c8" strokeWidth="1.2" />
                    <text x={b.x} y={b.y + 11} textAnchor="middle" fontSize="30" fontWeight="700" fill="#ff4545">{b.n}</text>
                </g>
            ))}
        </svg>
    );
}

export default function App() {
    return (
        <div className="relative flex min-h-screen flex-col overflow-hidden border-r-2 border-black bg-white font-['Liberation_Sans',Arial,sans-serif]">
            <TitleBar />
            <TabBar />
            <Ribbon />
            <main className="relative flex flex-1 items-start justify-between">
                <Scene />
                <div className="relative flex flex-col self-stretch">
                    <Browser />
                    <div className="mt-auto mb-[6px] ml-[5px] flex h-[30px] items-center border-r-2 border-b-2 border-l border-[#c8c8c8] bg-[#f1f1f1] pr-3 pl-[30px] text-[14px] text-[#666]">
                        <h2>COMMENTAIRES</h2>
                        <button aria-label="Ajouter un commentaire" className="ml-auto"><FaPlusCircle className="size-3 text-[#222]" /></button>
                    </div>
                </div>
                <Banner />
                <ValueBox />
                <NavBar />
                <div className="relative flex flex-col items-end self-stretch">
                    <ExtrudeDialog />
                    <p className="mt-auto mr-[20px] mb-2 text-[14px] font-bold text-[#222]">1 Contour | Aire : 4536.46 mm^2</p>
                </div>
            </main>
            <Timeline />
            <div className="h-[9px] bg-linear-to-r from-[#ece4b0] via-[#e3e0c0] via-75% to-[#ece5a8]" />
            <Callouts />
        </div>
    );
}
